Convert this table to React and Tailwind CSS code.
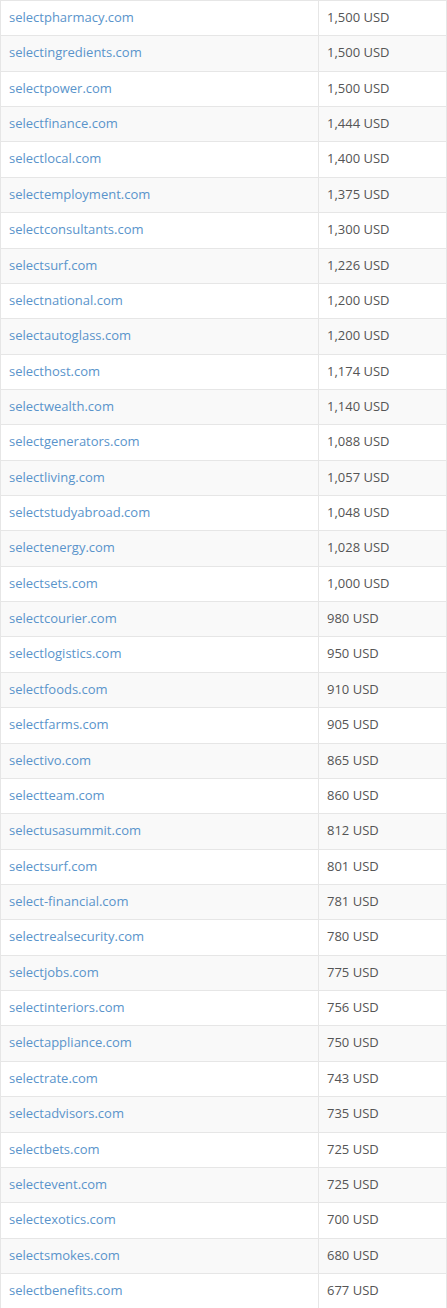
import React from 'react';

const rows = [
  ['selectpharmacy.com', '1,500 USD'],
  ['selectingredients.com', '1,500 USD'],
  ['selectpower.com', '1,500 USD'],
  ['selectfinance.com', '1,444 USD'],
  ['selectlocal.com', '1,400 USD'],
  ['selectemployment.com', '1,375 USD'],
  ['selectconsultants.com', '1,300 USD'],
  ['selectsurf.com', '1,226 USD'],
  ['selectnational.com', '1,200 USD'],
  ['selectautoglass.com', '1,200 USD'],
  ['selecthost.com', '1,174 USD'],
  ['selectwealth.com', '1,140 USD'],
  ['selectgenerators.com', '1,088 USD'],
  ['selectliving.com', '1,057 USD'],
  ['selectstudyabroad.com', '1,048 USD'],
  ['selectenergy.com', '1,028 USD'],
  ['selectsets.com', '1,000 USD'],
  ['selectcourier.com', '980 USD'],
  ['selectlogistics.com', '950 USD'],
  ['selectfoods.com', '910 USD'],
  ['selectfarms.com', '905 USD'],
  ['selectivo.com', '865 USD'],
  ['selectteam.com', '860 USD'],
  ['selectusasummit.com', '812 USD'],
  ['selectsurf.com', '801 USD'],
  ['select-financial.com', '781 USD'],
  ['selectrealsecurity.com', '780 USD'],
  ['selectjobs.com', '775 USD'],
  ['selectinteriors.com', '756 USD'],
  ['selectappliance.com', '750 USD'],
  ['selectrate.com', '743 USD'],
  ['selectadvisors.com', '735 USD'],
  ['selectbets.com', '725 USD'],
  ['selectevent.com', '725 USD'],
  ['selectexotics.com', '700 USD'],
  ['selectsmokes.com', '680 USD'],
  ['selectbenefits.com', '677 USD'],
];

export default function App() {
  return (
    <div className="w-[447px] h-[1308px] overflow-hidden bg-white font-['Open_Sans',sans-serif] text-[13px] text-[#555]">
      <table className="w-full border-collapse">
        <tbody>
          {rows.map(([domain, price], i) => (
            <tr key={i} className={i % 2 === 1 ? 'bg-[#f9f9f9]' : 'bg-white'}>
              <td className="w-[318px] border border-[#e6e6e6] px-2 pt-[7px] pb-[9px] leading-[18.36px] align-middle">
                <a href="#" className="text-[#5a94cb]">{domain}</a>
              </td>
              <td className="border border-[#e6e6e6] px-2 pt-[7px] pb-[9px] leading-[18.36px] align-middle">{price}</td>
            </tr>
          ))}
        </tbody>
      </table>
    </div>
  );
}
